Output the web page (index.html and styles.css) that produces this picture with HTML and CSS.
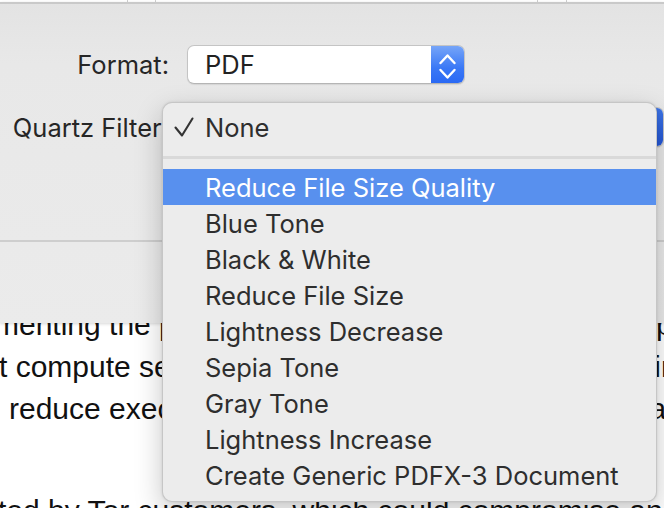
FILE: index.html
```html
<!DOCTYPE html>
<html lang="en">
<head>
<meta charset="utf-8">
<title>Print – Quartz Filter</title>
<link rel="stylesheet" href="styles.css">
</head>
<body>
<div class="screen">
  <div class="topstrip">
    <span class="tab tab-a"></span>
    <span class="tab tab-b"></span>
  </div>
  <div class="sheet">
    <div class="form">
      <span class="lbl">Format:</span>
      <div class="popup popup-format">
        <span class="val">PDF</span>
        <span class="stepper">
          <svg width="33" height="39" viewBox="0 0 33 39"><path d="M9.5 17 L16.5 9.5 L23.5 17 M9.5 24 L16.5 31.5 L23.5 24" fill="none" stroke="#fff" stroke-width="2.4" stroke-linecap="round" stroke-linejoin="round"/></svg>
        </span>
      </div>
      <span class="lbl">Quartz Filter:</span>
      <div class="popup popup-filter">
        <span class="val">None</span>
        <span class="stepper"></span>
      </div>
    </div>
    <div class="divider"></div>
    <div class="sheet-foot"></div>
  </div>
  <div class="doc">
    <div class="doc-inner">
      <p class="ln ln1">menting the proposed changes, we provisioned a pool of</p>
      <p class="ln ln2">t compute servers and measured the overhead, aiming to</p>
      <p class="ln ln3">reduce execution time without weakening the guarantees.</p>
      <p class="ln ln4">ted by Tor customers, which could compromise anonymity</p>
    </div>
  </div>
  <div class="menu">
    <div class="item checked">
      <span class="mark"><svg width="20" height="20" viewBox="0 0 20 20"><path d="M1.5 10.5 L8 18.5 L18.5 1.5" fill="none" stroke="#333" stroke-width="2.1" stroke-linecap="round" stroke-linejoin="round"/></svg></span>
      <span class="txt">None</span>
    </div>
    <div class="sep"></div>
    <div class="item active"><span class="mark"></span><span class="txt">Reduce File Size Quality</span></div>
    <div class="item"><span class="mark"></span><span class="txt">Blue Tone</span></div>
    <div class="item"><span class="mark"></span><span class="txt">Black &amp; White</span></div>
    <div class="item"><span class="mark"></span><span class="txt">Reduce File Size</span></div>
    <div class="item"><span class="mark"></span><span class="txt">Lightness Decrease</span></div>
    <div class="item"><span class="mark"></span><span class="txt">Sepia Tone</span></div>
    <div class="item"><span class="mark"></span><span class="txt">Gray Tone</span></div>
    <div class="item"><span class="mark"></span><span class="txt">Lightness Increase</span></div>
    <div class="item"><span class="mark"></span><span class="txt">Create Generic PDFX-3 Document</span></div>
  </div>
</div>
</body>
</html>
```

FILE: styles.css
```css
* { box-sizing: border-box; }
html, body { margin: 0; padding: 0; }
body {
  width: 664px;
  height: 508px;
  overflow: hidden;
  background: #ffffff;
  font-family: "Inter", "Noto Sans", sans-serif;
}
.screen {
  position: relative;
  width: 664px;
  height: 508px;
  overflow: hidden;
  display: flex;
  flex-direction: column;
}

/* top strip */
.topstrip {
  height: 2px;
  background: #ffffff;
  display: flex;
  flex: none;
}
.tab {
  height: 2px;
  border-left: 1px solid #cfcfcf;
  border-right: 1px solid #cfcfcf;
}
.tab-a { margin-left: 127px; width: 29px; }
.tab-b { margin-left: 381px; width: 30px; }

/* sheet */
.sheet {
  position: relative;
  z-index: 1;
  flex: none;
  height: 321px;
  border-top: 2px solid #c9c9c9;
  background: linear-gradient(#e3e3e3 0px, #e8e8e8 60px, #eaeaea 240px, #ebebeb 321px);
  box-shadow: 0 1px 3px rgba(0, 0, 0, 0.16);
  display: flex;
  flex-direction: column;
}
.form {
  display: grid;
  grid-template-columns: 169px 477px;
  column-gap: 18px;
  row-gap: 23px;
  align-items: center;
  align-content: start;
  padding-top: 41px;
  height: 236px;
}
.lbl {
  text-align: right;
  font-size: 25.5px;
  color: #262626;
  white-space: nowrap;
}
.popup {
  position: relative;
  display: flex;
  align-items: center;
  height: 39px;
  background: #ffffff;
  border: 1px solid #c4c4c4;
  border-bottom-color: #b5b5b5;
  border-radius: 7px;
  box-shadow: 0 1px 1px rgba(0, 0, 0, 0.08);
  overflow: hidden;
}
.popup-format { width: 278px; }
.popup-filter { width: 477px; height: 40px; }
.popup .val {
  flex: 1;
  padding-left: 17px;
  font-size: 25.5px;
  color: #222;
}
.stepper {
  width: 33px;
  height: 100%;
  background: linear-gradient(#76a5f8, #3a78f6 60%, #2a69f4);
  display: flex;
}
.popup-filter .stepper { background: linear-gradient(#3d74e6, #2457d6); }

.divider {
  height: 2px;
  background: #cecece;
  flex: none;
}
.sheet-foot { flex: 1; }

/* document */
.doc {
  flex: 1;
  overflow: hidden;
  background: #fff;
}
.doc-inner { margin-top: -19px; }
.ln {
  margin: 0;
  font-family: "Liberation Sans", Arial, sans-serif;
  font-size: 30px;
  line-height: 42px;
  color: #111;
  white-space: nowrap;
}
.ln1 { text-indent: -6px; }
.ln2 { text-indent: -1px; }
.ln3 { text-indent: 9px; }
.ln4 { text-indent: -2px; margin-top: 60px; }

/* menu */
.menu {
  position: absolute;
  top: 102px;
  left: 162px;
  width: 495px;
  height: 400px;
  padding: 6px 0 8px;
  background: #ececec;
  border: 1px solid rgba(0, 0, 0, 0.16);
  border-radius: 10px;
  box-shadow: 0 10px 28px rgba(0, 0, 0, 0.22), 0 0 3px rgba(0, 0, 0, 0.1);
  z-index: 5;
}
.item {
  display: flex;
  align-items: center;
  height: 36px;
  font-size: 25.5px;
  color: #2e2e2e;
  white-space: nowrap;
}
.mark {
  width: 42px;
  flex: none;
  display: flex;
  padding-left: 11px;
}
.item.active {
  background: #5890ee;
  color: #ffffff;
}
.sep {
  height: 24px;
  display: flex;
  align-items: center;
}
.sep::before {
  content: "";
  flex: 1;
  height: 3px;
  background: #d9d9d9;
}
```
